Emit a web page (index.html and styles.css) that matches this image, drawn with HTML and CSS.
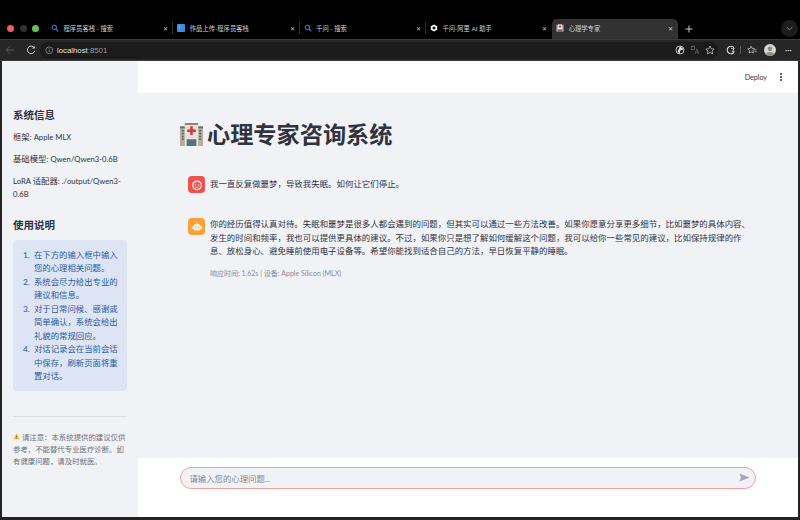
FILE: index.html
```html
<!DOCTYPE html>
<html lang="zh-CN">
<head>
<meta charset="utf-8">
<title>心理学专家</title>
<link rel="stylesheet" href="styles.css">
</head>
<body>
<div class="window">
  <div class="tabbar">
    <div class="lights"><span class="light red"></span><span class="light grey"></span><span class="light green"></span></div>
    <div class="tab sep">
      <svg class="fav" viewBox="0 0 10 10"><circle cx="4.2" cy="4.2" r="2.7" fill="none" stroke="#3f6fc4" stroke-width="1.4"/><path d="M6.2 6.2 9 9" stroke="#3f6fc4" stroke-width="1.6"/></svg>
      <span class="tab-title">程序员客栈 - 搜索</span><span class="close">✕</span>
    </div>
    <div class="tab sep">
      <svg class="fav" viewBox="0 0 10 10"><rect width="10" height="10" rx="1" fill="#3b8ee0"/><path d="M2 2.5 4 4 2 5.5" fill="none" stroke="#cfe4fa" stroke-width=".6"/></svg>
      <span class="tab-title">作品上传-程序员客栈</span><span class="close">✕</span>
    </div>
    <div class="tab sep">
      <svg class="fav" viewBox="0 0 10 10"><circle cx="4.2" cy="4.2" r="2.7" fill="none" stroke="#3f6fc4" stroke-width="1.4"/><path d="M6.2 6.2 9 9" stroke="#3f6fc4" stroke-width="1.6"/></svg>
      <span class="tab-title">千问 - 搜索</span><span class="close">✕</span>
    </div>
    <div class="tab">
      <svg class="fav" viewBox="0 0 10 10"><path d="M5 .5 9 2.8v4.4L5 9.5 1 7.2V2.8Z" fill="#f2f2f2"/><path d="M5 3 6.8 4v2L5 7 3.200 6V4Z" fill="#111"/></svg>
      <span class="tab-title">千问-阿里 AI 助手</span><span class="close">✕</span>
    </div>
    <div class="tab active">
      <svg class="fav" viewBox="0 0 10 10"><rect x=".5" y="1" width="9" height="8.500" fill="#b9aca6"/><rect x="2.500" y=".5" width="5" height="6" fill="#eee"/><path d="M5 1.500v3.500M3.300 3.200h3.400" stroke="#e0303a" stroke-width="1.300"/><rect x="2.500" y="6.800" width="5" height="2.700" fill="#667"/></svg>
      <span class="tab-title">心理学专家</span><span class="close">✕</span>
    </div>
    <svg class="new-tab" viewBox="0 0 8 8"><path d="M4 .5v7M.5 4h7" stroke="#c8c8c8" stroke-width="1"/></svg>
    <span class="tab-menu"><svg viewBox="0 0 10 6" class="chev"><path d="M1 1 5 5 9 1" fill="none" stroke="#b5b5b5" stroke-width="1"/></svg></span>
  </div>

  <div class="toolbar">
    <svg class="tool back" viewBox="0 0 12 12"><path d="M11 6H1.500M6 1.500 1.500 6 6 10.500" fill="none" stroke="#666" stroke-width="1"/></svg>
    <svg class="tool reload" viewBox="0 0 12 12"><path d="M10 3.500A4.500 4.500 0 1 0 10.500 7" fill="none" stroke="#d0d0d0" stroke-width="1.200"/><path d="M10.500 .8v3.400H7.100Z" fill="#d0d0d0"/></svg>
    <div class="address">
      <svg class="info" viewBox="0 0 10 10"><circle cx="5" cy="5" r="4" fill="none" stroke="#aaa" stroke-width=".8"/><path d="M5 4.300v3M5 2.600v.9" stroke="#aaa" stroke-width=".8"/></svg>
      <span class="url"><b>localhost</b>:8501</span>
      <svg class="addr-icon" viewBox="0 0 12 12"><circle cx="6" cy="6" r="4.800" fill="none" stroke="#ddd" stroke-width="1"/><path d="M6 1.500 10.500 5 6 7v3.500L3 8Z" fill="#ddd"/></svg>
      <svg class="addr-icon" viewBox="0 0 12 12"><rect x="1.500" y="1.500" width="4" height="4" fill="none" stroke="#777" stroke-width=".8"/><path d="M6 10.500 8.200 5l2.300 5.500M7 8.800h2.600" fill="none" stroke="#777" stroke-width=".8"/></svg>
      <svg class="addr-icon" viewBox="0 0 12 12"><path d="M6 1.200 7.500 4.500l3.500.4-2.600 2.300.8 3.500L6 9 2.800 10.700l.8-3.500L1 4.900l3.500-.4Z" fill="none" stroke="#ccc" stroke-width=".9"/></svg>
    </div>
    <div class="tool-right">
      <svg class="tool" viewBox="0 0 12 12"><path d="M9.500 3.200A4.500 4.500 0 1 0 9.500 8.800" fill="none" stroke="#ddd" stroke-width="1.300"/><path d="M6 4h4L8 6.500l2 1.500H7" fill="none" stroke="#ddd" stroke-width="1"/></svg>
      <span class="divider"></span>
      <svg class="tool" viewBox="0 0 12 12"><path d="M5 1.500 6.300 4.200l3 .4L7 6.700l.6 3L5 8.200l-2.600 1.500.6-3L.8 4.600l3-.4Z" fill="none" stroke="#ccc" stroke-width=".9"/><path d="M9 6h2.500M9 8h2.500" stroke="#ccc" stroke-width=".8"/></svg>
      <svg class="profile" viewBox="0 0 12 12"><circle cx="6" cy="6" r="6" fill="#d8d4d0"/><circle cx="6" cy="4.700" r="2.300" fill="#8e8a86"/><path d="M1.800 10.300a4.600 3.800 0 0 1 8.400 0A6 6 0 0 1 1.800 10.300Z" fill="#8e8a86"/></svg>
      <span class="dots">···</span>
    </div>
  </div>

  <div class="page">
    <aside class="sidebar">
      <h3 class="side-h first">系统信息</h3>
      <p class="side-p">框架<span class="lat">: Apple MLX</span></p>
      <p class="side-p">基础模型<span class="lat">: Qwen/Qwen3-0.6B</span></p>
      <p class="side-p"><span class="lat">LoRA </span>适配器<span class="lat">: ./output/Qwen3-</span><br><span class="lat">0.6B</span></p>
      <h3 class="side-h second">使用说明</h3>
      <div class="info-box">
        <ol class="steps">
          <li>在下方的输入框中输入您的心理相关问题。</li>
          <li>系统会尽力给出专业的建议和信息。</li>
          <li>对于日常问候、感谢或简单确认，系统会给出礼貌的常规回应。</li>
          <li>对话记录会在当前会话中保存，刷新页面将重置对话。</li>
        </ol>
      </div>
      <hr class="rule">
      <p class="notice"><svg class="warn" viewBox="0 0 10 10"><path d="M5 .8 9.700 9H.3Z" fill="#f4c430"/><path d="M5 3.500v3M5 7.300v.8" stroke="#5a4a10" stroke-width=".9"/></svg> 请注意：本系统提供的建议仅供参考，不能替代专业医疗诊断。如有健康问题，请及时就医。</p>
    </aside>
    <main class="main">
      <header class="header"><span class="deploy">Deploy</span><span class="kebab"><i></i><i></i><i></i></span></header>
      <section class="content">
        <h1 class="title">
          <svg class="hospital" viewBox="0 0 24 24"><rect x="0" y="5" width="24" height="19" fill="#b5aca0"/><rect x="0" y="3.500" width="24" height="2" fill="#6f675f"/><rect x="5" y="0" width="14" height="24" fill="#e6e2db"/><rect x="5" y="0" width="14" height="2" fill="#8c857c"/><path d="M12 3.500v9M7.500 8h9" stroke="#e0303a" stroke-width="2.600"/><rect x="7" y="17" width="10" height="7" fill="#56707f"/><path d="M2 8h2M2 11h2M2 14h2M2 17h2M20 8h2M20 11h2M20 14h2M20 17h2" stroke="#5a6670" stroke-width="1.500"/></svg>
          <span>心理专家咨询系统</span>
        </h1>
        <div class="msg user">
          <span class="avatar red-a"><svg viewBox="0 0 12 12"><circle cx="6" cy="6.300" r="4.300" fill="none" stroke="#fff" stroke-width="1.100"/><circle cx="4.400" cy="6" r=".7" fill="#fff"/><circle cx="7.600" cy="6" r=".7" fill="#fff"/><path d="M4.300 7.800a2 1.600 0 0 0 3.400 0M3.600 3.400 6 2l2.400 1.400" fill="none" stroke="#fff" stroke-width=".7"/></svg></span>
          <p class="msg-text">我一直反复做噩梦，导致我失眠。如何让它们停止。</p>
        </div>
        <div class="msg bot">
          <span class="avatar orange-a"><svg viewBox="0 0 12 12"><path d="M6 1.300v2M1.300 5.500v2.500M10.700 5.500v2.500" stroke="#fff" stroke-width=".9"/><rect x="2.300" y="3.200" width="7.400" height="6.300" rx="2" fill="#fff"/><circle cx="4.600" cy="5.800" r=".8" fill="#f9a23c"/><circle cx="7.400" cy="5.800" r=".8" fill="#f9a23c"/><path d="M4.500 7.800h3" stroke="#f9a23c" stroke-width=".7"/></svg></span>
          <div class="msg-body">
            <p class="msg-text bot-text">你的经历值得认真对待。失眠和噩梦是很多人都会遇到的问题，但其实可以通过一些方法改善。如果你愿意分享更多细节，比如噩梦的具体内容、发生的时间和频率，我也可以提供更具体的建议。不过，如果你只是想了解如何缓解这个问题，我可以给你一些常见的建议，比如保持规律的作息、放松身心、避免睡前使用电子设备等。希望你能找到适合自己的方法，早日恢复平静的睡眠。</p>
            <p class="meta">响应时间: 1.62s | 设备: Apple Silicon (MLX)</p>
          </div>
        </div>
      </section>
      <footer class="footer">
        <div class="chat-input">
          <span class="placeholder">请输入您的心理问题...</span>
          <svg class="send" viewBox="0 0 12 10"><path d="M.5.500 11.500 5 .5 9.500 2 5Z" fill="#a3a8b8"/></svg>
        </div>
      </footer>
    </main>
  </div>
</div>
</body>
</html>
```
FILE: styles.css
```css
* { box-sizing: border-box; }
html, body { margin: 0; padding: 0; }
body {
  width: 800px;
  height: 520px;
  overflow: hidden;
  background: #232323;
  font-family: Lato, "Noto Sans CJK SC", sans-serif;
}
.window { display: flex; flex-direction: column; height: 520px; }

/* tab strip */
.tabbar {
  height: 40px;
  background: #000;
  display: flex;
  align-items: flex-end;
  color: #d2d2d2;
  border-bottom: 1px solid #3c3c3c;
}
.lights { display: flex; gap: 5.500px; width: 47px; padding: 0 0 7.500px 7px; }
.light { width: 7px; height: 7px; border-radius: 50%; }
.red { background: #ee5f5b; }
.grey { background: #333; }
.green { background: #5ec452; }
.tab {
  width: 126.300px;
  height: 20px;
  display: flex;
  align-items: center;
  padding: 0 4px 2px 4px;
  font-size: 6.300px;
  position: relative;
}
.sep::after {
  content: "";
  position: absolute;
  right: 0;
  top: 3px;
  height: 12px;
  width: 1px;
  background: #333;
}
.tab.active { background: #323232; border-radius: 5px 5px 0 0; }
.fav { width: 8px; height: 8px; margin-right: 4.500px; flex: none; }
.tab-title { flex: 1; white-space: nowrap; }
.close { font-size: 6px; color: #ccc; width: 6px; }
.new-tab { width: 8px; height: 8px; margin: 0 0 6px 7px; flex: none; }
.tab-menu {
  margin-left: auto;
  margin-right: 2px;
  margin-bottom: 2px;
  width: 17px;
  height: 17px;
  border-radius: 50%;
  background: #1d1d1d;
  display: flex;
  align-items: center;
  justify-content: center;
}
.chev { width: 7px; height: 5px; }

/* toolbar */
.toolbar {
  height: 21px;
  background: #262626;
  display: flex;
  align-items: center;
  padding-left: 5px;
  border-bottom: 1px solid #3a3a3a;
}
.tool { width: 10px; height: 10px; flex: none; }
.back { margin-right: 11px; }
.reload { margin-right: 4px; }
.address {
  flex: 1;
  height: 17px;
  background: #1b1b1b;
  border-radius: 9px;
  display: flex;
  align-items: center;
  padding: 0 3px 0 4.500px;
}
.info { width: 8.500px; height: 8.500px; margin-right: 4px; }
.url { flex: 1; font-size: 7.800px; color: #9a9a9a; font-family: "Liberation Sans", sans-serif; }
.url b { font-weight: 400; color: #e2e2e2; }
.addr-icon { width: 10px; height: 10px; margin-left: 5px; }
.tool-right { display: flex; align-items: center; width: 82px; padding-left: 8px; flex: none; }
.divider { width: 1px; height: 8px; background: #555; margin: 0 6px 0 4px; }
.profile { width: 12px; height: 12px; margin-left: 7px; }
.dots { color: #ccc; font-size: 8px; font-weight: 700; margin-left: 9px; }

/* page */
.page {
  flex: 1;
  min-height: 0;
  margin: 0 2px 3px;
  display: flex;
}
.sidebar {
  width: 136px;
  flex: none;
  background: #f0f2f6;
  padding: 0 11px;
  color: #31333f;
  font-size: 8.400px;
  line-height: 13.500px;
}
.lat { font-size: 7.700px; }
.side-h { margin: 0; font-size: 10.500px; font-weight: 700; line-height: 14px; }
.side-h.first { margin-top: 47px; }
.side-h.second { margin-top: 16px; }
.side-p { margin: 8.500px 0 0; }
.info-box {
  margin-top: 8px;
  background: #dde5f5;
  border-radius: 4px;
  padding: 9px 8px 7px 0;
  color: #2b5aa6;
  font-size: 8.400px;
}
.steps { margin: 0; padding-left: 21px; }
.steps li::marker { content: counter(list-item) ".  "; }
.rule { margin: 25px 0 0; border: 0; border-top: 1px solid #dcdde1; }
.notice { margin: 15px 0 0; font-size: 7.400px; line-height: 12.300px; color: #6f7079; }
.warn { width: 7px; height: 7px; }

.main { flex: 1; min-width: 0; display: flex; flex-direction: column; }
.header {
  height: 32px;
  background: #fff;
  flex: none;
  display: flex;
  align-items: center;
  justify-content: flex-end;
  padding-right: 16px;
  color: #31333f;
  font-size: 7.100px;
}
.deploy { margin-right: 13px; }
.kebab { display: flex; flex-direction: column; gap: 1.200px; }
.kebab i { width: 2px; height: 2px; border-radius: 50%; background: #31333f; }
.content { flex: 1; background: #f0f2f6; padding: 26px 43px 0 42px; color: #31333f; min-height: 0; }
.title { margin: 0; display: flex; align-items: center; font-size: 23.200px; line-height: 30px; font-weight: 700; gap: 4px; }
.hospital { width: 23px; height: 23px; }
.msg { display: flex; gap: 5px; margin-left: 8px; }
.msg.user { margin-top: 27px; }
.msg.bot { margin-top: 25px; }
.avatar { width: 17px; height: 17px; border-radius: 4px; flex: none; display: flex; align-items: center; justify-content: center; }
.avatar svg { width: 12px; height: 12px; }
.red-a { background: #f0514f; }
.orange-a { background: #f9a23c; }
.msg-text { margin: 0; font-size: 8.450px; line-height: 13.500px; padding-top: 2px; color: #31333f; }
.msg-text.bot-text { padding-top: 0; }
.msg-body { flex: 1; }
.meta { margin: 9px 0 0; font-size: 7px; line-height: 10px; color: #8b8d96; }

.footer { height: 59px; background: #fff; flex: none; padding: 9px 42px 0 42px; }
.chat-input {
  height: 21.500px;
  border: 1px solid #f3a0a0;
  border-radius: 11px;
  background: #f0f2f6;
  display: flex;
  align-items: center;
  justify-content: space-between;
  padding: 0 5px 0 8.500px;
}
.placeholder { font-size: 8.400px; color: #858791; }
.send { width: 11px; height: 9px; }
```
